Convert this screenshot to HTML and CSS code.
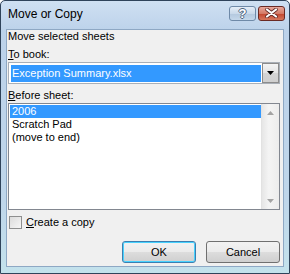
FILE: index.html
```html
<html>
<head>
    <title>Move or Copy</title>
    <link rel="stylesheet" href="styles.css">
</head>
<body>
    <div class="window">
        <div class="titlebar">
            <span class="title">Move or Copy</span>
            <div class="caption">
                <span class="capbtn help">?</span>
                <span class="capbtn close">
                    <svg width="13" height="10" viewBox="0 0 13 10">
                        <path d="M2 1.5 L11 8.5 M11 1.5 L2 8.5" stroke="#5a2420" stroke-width="3.6" stroke-linecap="round"/>
                        <path d="M2 1.5 L11 8.5 M11 1.5 L2 8.5" stroke="#ffffff" stroke-width="2.2" stroke-linecap="round"/>
                    </svg>
                </span>
            </div>
        </div>

        <div class="client">
            <div class="label">Move selected sheets</div>
            <div class="label tobook"><u>T</u>o book:</div>
            <div class="combo">
                <div class="combo-value">Exception Summary.xlsx</div>
                <div class="combo-btn">
                    <svg width="7" height="4" viewBox="0 0 7 4"><path d="M0 0 H7 L3.5 4 Z" fill="#000"/></svg>
                </div>
            </div>
            <div class="label before"><u>B</u>efore sheet:</div>
            <div class="listbox">
                <ul class="items">
                    <li class="selected">2006</li>
                    <li>Scratch Pad</li>
                    <li>(move to end)</li>
                </ul>
                <div class="scrollbar">
                    <div class="arrow"><svg width="7" height="4" viewBox="0 0 7 4"><path d="M0 4 H7 L3.5 0 Z" fill="#a3a3a3"/></svg></div>
                    <div class="arrow"><svg width="7" height="4" viewBox="0 0 7 4"><path d="M0 0 H7 L3.5 4 Z" fill="#a3a3a3"/></svg></div>
                </div>
            </div>
            <label class="check"><span class="box"></span><span><u>C</u>reate a copy</span></label>
            <div class="buttons">
                <button class="btn default">OK</button>
                <button class="btn">Cancel</button>
            </div>
        </div>
    </div>
</body>
</html>
```

FILE: styles.css
```css
body{
    margin: 0;
    font-family: "Liberation Sans", Arial, sans-serif;
}
.window{
    width: 290px;
    height: 274px;
    box-sizing: border-box;
    border: 1px solid #2f435a;
    border-radius: 5px 5px 0 0;
    padding: 0 5px 6px 5px;
    display: flex;
    flex-direction: column;
    background: linear-gradient(#cfe0f2, #bcd2ea 30px, #bfd6ea 200px, #c3e2ec);
}
.titlebar{
    height: 28px;
    display: flex;
    align-items: center;
    padding-left: 2px;
}
.title{
    flex: 1;
    font-size: 12px;
    color: #000;
    padding-bottom: 2px;
}
.caption{
    display: flex;
    gap: 2px;
    margin-right: -1px;
    margin-bottom: 4px;
}
.capbtn{
    width: 27px;
    height: 15px;
    box-sizing: border-box;
    border-radius: 3px;
    display: flex;
    align-items: center;
    justify-content: center;
}
.help{
    border: 1px solid #6f8aa8;
    background: linear-gradient(#e4edf7, #c9d9ea 50%, #b3c8de 51%, #c4d7ea);
    color: #fff;
    font-weight: bold;
    font-size: 13px;
    text-shadow: 1px 0 #4d6580, -1px 0 #4d6580, 0 1px #4d6580, 0 -1px #4d6580;
}
.close{
    border: 1px solid #6a2a24;
    background: linear-gradient(#e9a99b, #d47a66 50%, #c2442c 51%, #d5775d);
}
.client{
    flex: 1;
    background: #f0f0f0;
    border: 1px solid #8ea8c4;
    padding: 0 3px 3px 1px;
    display: flex;
    flex-direction: column;
    font-size: 11px;
    color: #000;
}
.label{
    line-height: 13px;
    height: 13px;
}
.tobook{
    margin-top: 5px;
}
.combo{
    margin-top: 1px;
    height: 22px;
    box-sizing: border-box;
    border: 1px solid #a9afb7;
    background: #fff;
    display: flex;
    padding: 1px 0 0 2px;
}
.combo-value{
    flex: 1;
    height: 17px;
    margin-top: 1px;
    margin-right: 1px;
    background: #3399ff;
    color: #fff;
    line-height: 17px;
    padding-left: 1px;
}
.combo-btn{
    width: 17px;
    height: 20px;
    margin-top: -1px;
    box-sizing: border-box;
    border: 1px solid #8c8c8c;
    background: linear-gradient(#f4f4f4, #e4e4e4 50%, #d5d5d5 51%, #cfcfcf);
    display: flex;
    align-items: center;
    justify-content: center;
}
.before{
    margin-top: 5px;
}
.listbox{
    margin-top: 1px;
    height: 107px;
    box-sizing: border-box;
    border: 1px solid #828790;
    background: #fff;
    display: flex;
}
.items{
    flex: 1;
    list-style: none;
    margin: 0;
    padding: 1px 0 0 1px;
}
.items li{
    height: 13px;
    line-height: 13px;
    padding-left: 2px;
}
.items .selected{
    background: #3399ff;
    color: #fff;
}
.scrollbar{
    width: 17px;
    background: linear-gradient(90deg, #e6e6e6, #f4f4f4 40%, #ececec);
    border-left: 1px solid #e2e2e2;
    display: flex;
    flex-direction: column;
    justify-content: space-between;
}
.arrow{
    height: 17px;
    display: flex;
    align-items: center;
    justify-content: center;
}
.check{
    margin-top: 6px;
    height: 13px;
    line-height: 13px;
    display: flex;
    align-items: center;
    gap: 4px;
    padding-left: 1px;
}
.box{
    width: 13px;
    height: 13px;
    box-sizing: border-box;
    border: 1px solid #8e8f8f;
    background: linear-gradient(135deg, #dcdcdc, #f6f6f6);
}
.buttons{
    margin-top: 12px;
    display: flex;
    justify-content: flex-end;
    gap: 10px;
}
.btn{
    width: 74px;
    height: 22px;
    box-sizing: border-box;
    border: 1px solid #707070;
    border-radius: 3px;
    background: linear-gradient(#f2f2f2, #ebebeb 50%, #dddddd 51%, #cfcfcf);
    font-family: "Liberation Sans", Arial, sans-serif;
    font-size: 11px;
    color: #000;
    padding: 0;
}
.default{
    border-color: #3c7fb1;
    box-shadow: inset 0 0 0 1px #48d2fe;
}
```
